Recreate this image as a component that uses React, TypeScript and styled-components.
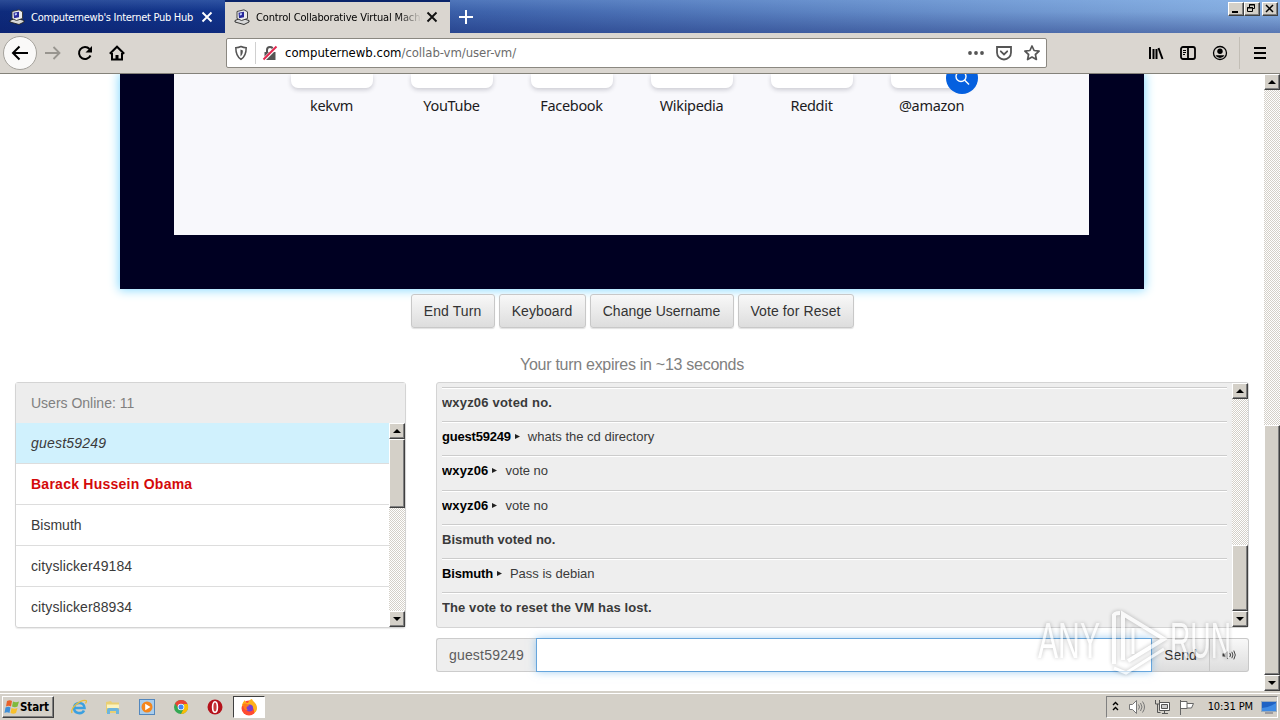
import React from 'react';
import styled, { createGlobalStyle, css } from 'styled-components';

const GlobalStyle = createGlobalStyle`
  * {
    box-sizing: border-box;
  }
  body {
    margin: 0;
    overflow: hidden;
    font-family: 'Liberation Sans', Arial, sans-serif;
  }
`;

const tahoma = `'DejaVu Sans Condensed', 'DejaVu Sans', sans-serif`;

interface TextProps {
  $size?: number;
  $spacing?: number;
  $color?: string;
}
const Text = styled.span<TextProps>`
  white-space: pre;
  font-size: ${props => props.$size || 14}px;
  letter-spacing: ${props => props.$spacing || 0}px;
  color: ${props => props.$color || 'inherit'};
`;

const Window = styled.div`
  position: relative;
  width: 1280px;
  height: 720px;
  overflow: hidden;
  display: flex;
  flex-direction: column;
  background: #fff;
`;

/* ---------- browser chrome ---------- */
const TabStrip = styled.div`
  height: 33px;
  flex: none;
  display: flex;
  justify-content: space-between;
  background: linear-gradient(180deg, rgba(160, 205, 255, 0.2), rgba(10, 40, 110, 0) 35%, rgba(10, 25, 100, 0.36)),
    linear-gradient(90deg, #0e2b7c 0, #12358c 225px, #3c61aa 460px, #5f86c4 850px, #86aee0 1280px);
`;
const Tabs = styled.div`
  display: flex;
  font-family: ${tahoma};
`;
const Tab = styled.div<{ $active?: boolean }>`
  width: 225px;
  height: 33px;
  display: flex;
  align-items: center;
  padding: 1px 11px 0 9px;
  color: #fff;
  svg {
    flex: none;
  }
  ${props =>
    props.$active &&
    css`
      color: #000;
      background: #dad6d0;
      border-top: 2px solid #0a246a;
      padding-top: 0;
      padding-bottom: 2px;
    `}
`;
const TabTitle = styled.div<{ $fade?: boolean }>`
  width: 167px;
  margin: 0 3px 0 6px;
  overflow: hidden;
  line-height: 18px;
  ${props => props.$fade && 'mask-image: linear-gradient(90deg, #000 142px, transparent 166px);'}
`;
const NewTab = styled.div`
  padding: 9px 9px;
`;
const Caption = styled.div`
  display: flex;
  padding: 2px 2px 0 0;
`;
const bevel = css`
  background: #d4d0c8;
  border: 1px solid;
  border-color: #fff #404040 #404040 #fff;
  box-shadow: inset -1px -1px 0 #808080;
`;
const CaptionButton = styled.div<{ $gap?: boolean }>`
  ${bevel}
  width: 16px;
  height: 14px;
  margin-left: ${props => (props.$gap ? 2 : 0)}px;
  svg {
    display: block;
  }
`;
const Toolbar = styled.div`
  height: 41px;
  flex: none;
  display: flex;
  align-items: center;
  background: #dad6d0;
  border-bottom: 1px solid #84827a;
  padding: 0 9px 1px 3px;
`;
const BackButton = styled.div`
  width: 34px;
  height: 34px;
  border-radius: 50%;
  background: #faf9f8;
  border: 1px solid #a5a29c;
  display: flex;
  align-items: center;
  justify-content: center;
`;
const NavIcons = styled.div`
  display: flex;
  gap: 16px;
  margin-left: 8px;
  width: 181px;
`;
const UrlBar = styled.div`
  width: 821px;
  height: 30px;
  background: #fff;
  border: 1px solid #8b8881;
  border-radius: 2px;
  display: flex;
  align-items: center;
  padding: 0 6px;
  font-family: ${tahoma};
  svg {
    flex: none;
  }
`;
const UrlDivider = styled.div`
  width: 1px;
  height: 22px;
  background: #d0d0d0;
  margin: 0 6px 0 6px;
`;
const Url = styled.div`
  flex: 1;
  margin-left: 7px;
  line-height: 20px;
`;
const UrlIcons = styled.div`
  display: flex;
  gap: 12px;
`;
const RightIcons = styled.div`
  flex: 1;
  display: flex;
  align-items: center;
  gap: 16px;
  padding-left: 101px;
`;
const ToolbarDivider = styled.div`
  width: 1px;
  height: 32px;
  background: #c2beb6;
  margin: 0 -3px 0 -5px;
`;

/* ---------- classic scrollbar ---------- */
const Track = styled.div`
  width: 16px;
  flex: none;
  display: flex;
  flex-direction: column;
  background: repeating-conic-gradient(#fff 0 25%, #d4d0c8 0 50%) 0 0 / 2px 2px;
`;
const ScrollButton = styled.div`
  ${bevel}
  height: 16px;
  flex: none;
  svg {
    display: block;
  }
`;
const Thumb = styled.div`
  ${bevel}
  flex: none;
`;
const Gap = styled.div`
  flex: 1;
`;

interface ScrollbarProps {
  before?: number;
  thumb: number;
}
const Scrollbar: React.FC<ScrollbarProps> = ({ before = 0, thumb }) => (
  <Track>
    <ScrollButton>
      <svg width="14" height="14">
        <path d="M3 9h8L7 5z" />
      </svg>
    </ScrollButton>
    <div style={{ height: before }} />
    <Thumb style={{ height: thumb }} />
    <Gap />
    <ScrollButton>
      <svg width="14" height="14">
        <path d="M3 5h8L7 9z" />
      </svg>
    </ScrollButton>
  </Track>
);

/* ---------- page ---------- */
const Viewport = styled.div`
  height: 617px;
  flex: none;
  display: flex;
`;
const Page = styled.div`
  width: 1264px;
  height: 617px;
  overflow: hidden;
  display: flex;
  flex-direction: column;
  align-items: center;
  color: #3a3a3a;
`;
const VmDisplay = styled.div`
  width: 1024px;
  height: 215px;
  flex: none;
  padding: 0 55px 54px 54px;
  background: #000022;
  box-shadow: 0 0 10px 1px #84d9ff;
`;
const NewTabPage = styled.div`
  height: 161px;
  background: #f8f8fc;
  padding-left: 98px;
  display: flex;
  font-family: 'Noto Sans', sans-serif;
  color: #1c1b22;
`;
const Site = styled.div`
  width: 120px;
  display: flex;
  flex-direction: column;
  align-items: center;
`;
const Tile = styled.div`
  position: relative;
  width: 82px;
  height: 14px;
  background: #fff;
  border-radius: 0 0 7px 7px;
  box-shadow: 0 2px 4px rgba(50, 50, 70, 0.22);
  clip-path: inset(0 -30px -20px -10px);
`;
const SearchBadge = styled.div`
  position: absolute;
  left: 55px;
  top: -12px;
  width: 32px;
  height: 32px;
  border-radius: 50%;
  background: #0560df;
`;
const SiteName = styled.div`
  margin: 5px 1px 0 0;
  line-height: 24px;
`;
const Actions = styled.div`
  display: flex;
  gap: 4px;
  margin-top: 5px;
  height: 34px;
`;
const buttonFace = css`
  background: linear-gradient(180deg, #f8f8f8, #dddddd);
  border: 1px solid #c8c8c8;
  display: flex;
  align-items: center;
  justify-content: center;
  color: #333;
`;
const Button = styled.div<{ $width: number }>`
  ${buttonFace}
  width: ${props => props.$width}px;
  height: 34px;
  border-radius: 3px;
  box-shadow: 0 1px 1px rgba(0, 0, 0, 0.12);
`;
const TurnStatus = styled.div`
  margin-top: 26px;
  height: 28px;
  line-height: 22px;
`;
const Columns = styled.div`
  width: 1234px;
  display: flex;
  gap: 30px;
`;
const UserPanel = styled.div`
  width: 391px;
  height: 246px;
  border: 1px solid #d4d4d4;
  border-radius: 3px;
  box-shadow: 0 1px 1px rgba(0, 0, 0, 0.08);
`;
const UserHeader = styled.div`
  height: 40px;
  padding-left: 15px;
  line-height: 40px;
  background: #ededed;
  color: #808080;
`;
const UserBody = styled.div`
  height: 204px;
  display: flex;
`;
const UserRows = styled.div`
  flex: 1;
  overflow: hidden;
`;
const UserRow = styled.div<{ $kind?: string }>`
  height: 41px;
  line-height: 40px;
  padding-left: 15px;
  border-bottom: 1px solid #ddd;
  ${props => props.$kind === 'self' && 'background: #d0f1fd; font-style: italic;'}
  ${props => props.$kind === 'admin' && 'color: #d40a0a; font-weight: bold;'}
`;
const ChatColumn = styled.div`
  width: 813px;
`;
const ChatBox = styled.div`
  height: 246px;
  display: flex;
  background: #eee;
  border: 1px solid #d4d4d4;
  border-radius: 3px;
`;
const Messages = styled.div`
  width: 785px;
  margin: 4px 5px 0;
  overflow: hidden;
`;
const Message = styled.div<{ $notice: boolean }>`
  height: 34.200px;
  border-top: 1px solid #ccc;
  box-shadow: inset 0 1px 0 #fff;
  line-height: ${props => (props.$notice ? 27 : 28)}px;
`;
const Bold = styled(Text)`
  font-weight: bold;
`;
const Marker = styled.svg`
  margin: 0 8px 2px 4px;
`;
const Composer = styled.div`
  margin-top: 10px;
  height: 34px;
  display: flex;
`;
const NameTag = styled.div`
  width: 100px;
  background: #eee;
  border: 1px solid #ccc;
  border-right: 0;
  border-radius: 3px 0 0 3px;
  display: flex;
  align-items: center;
  justify-content: center;
  color: #5c5c5c;
`;
const Input = styled.div`
  position: relative;
  width: 616px;
  background: #fff;
  border: 1px solid #66a5dc;
  box-shadow: 0 0 8px rgba(102, 175, 233, 0.6);
`;
const SendButton = styled.div`
  ${buttonFace}
  width: 58px;
  border-left: 0;
`;
const SoundButton = styled.div`
  ${buttonFace}
  width: 39px;
  border-left: 0;
  border-radius: 0 3px 3px 0;
`;

/* ---------- taskbar ---------- */
const Taskbar = styled.div`
  height: 29px;
  flex: none;
  display: flex;
  align-items: center;
  background: #d4d0c8;
  border-top: 2px solid #d4d0c8;
  box-shadow: inset 0 1px 0 #fff;
  padding: 1px 2px 0;
  font-family: ${tahoma};
`;
const StartButton = styled.div`
  ${bevel}
  width: 52px;
  height: 22px;
  display: flex;
  align-items: center;
  padding-left: 1px;
  font-weight: bold;
`;
const QuickLaunch = styled.div`
  display: flex;
  gap: 18px;
  margin: 0 10px 0 17px;
`;
const RunningTask = styled.div`
  width: 32px;
  height: 22px;
  background: #fff;
  border: 1px solid;
  border-color: #404040 #fff #fff #404040;
  display: flex;
  justify-content: center;
  align-items: center;
`;
const Tray = styled.div`
  width: 172px;
  height: 22px;
  margin-left: auto;
  border: 1px solid;
  border-color: #808080 #fff #fff #808080;
  display: flex;
  align-items: center;
  padding-left: 4px;
`;
const Clock = styled.div`
  margin: -2px 8px 0 13px;
  line-height: 20px;
`;

/* ---------- watermark over the page corner ---------- */
const Watermark = styled.svg`
  position: absolute;
  left: 1030px;
  top: 600px;
  overflow: visible;
  filter: drop-shadow(0 0 2px rgba(0, 0, 0, 0.4));
`;

const PcIcon = () => (
  <svg width="16" height="16" viewBox="0 0 16 16">
    <path d="M1 11.500L7 9l8 2.500v1.500L10 15.500 1 13z" fill="#d8d8d8" stroke="#222" strokeWidth=".9" />
    <path d="M3 2.500L10 .8l3.500 2v6.700L7.500 11.500 3 9.500z" fill="#ececec" stroke="#333" strokeWidth=".9" />
    <path d="M4.500 3.800l5.500-1v5.500L5 9.300z" fill="#28289a" />
    <path d="M5.800 4.500l2-.500v2l-2 .500z" fill="#c8d8ff" />
  </svg>
);

const CloseIcon = ({ color }: { color: string }) => (
  <svg width="12" height="12" viewBox="0 0 12 12" stroke={color} strokeWidth="1.900">
    <path d="M1.500 1.500l9 9M10.500 1.500l-9 9" />
  </svg>
);

const PageSpeakerIcon = () => (
  <svg width="14" height="14" viewBox="0 0 14 14" fill="none" stroke="#444">
    <path d="M.5 5.500h2L6 3v8L2.500 8.500h-2z" fill="#444" stroke="none" />
    <path d="M7.800 5q1.600 2 0 4M9.800 3.800q2.300 3.200 0 6.400M11.800 2.600q3 4.400 0 8.800" />
  </svg>
);

const TraySpeakerIcon = () => (
  <svg width="18" height="16" viewBox="0 0 18 16" fill="none" stroke="#777">
    <path d="M1.500 5.500h3l4-4v13l-4-4h-3z" fill="#fff" />
    <path d="M10.500 5.500q2 2.500 0 5M12.500 4q3 4 0 8M14.500 2.500q4 5.500 0 11" />
  </svg>
);

const FirefoxIcon = () => (
  <svg width="18" height="18" viewBox="0 0 18 18">
    <circle cx="9" cy="10" r="7.500" fill="#ff4b30" />
    <path d="M2 8C2 5 4 3 5 2c0 2 1 3 3 3 1-3 3-4 4-4 0 2 5 4 5 9 0 2-1 4-3 5 1-6-4-8-8-7z" fill="#ffb21a" />
    <circle cx="9.500" cy="10" r="3.600" fill="#7a3fd0" />
    <path d="M3 6c3-1 5 0 6 2-3 0-3 3-1 4-3 1-5-2-5-6z" fill="#ff7a1c" />
  </svg>
);

const sites = ['kekvm', 'YouTube', 'Facebook', 'Wikipedia', 'Reddit', '@amazon'];

const users = [
  { name: 'guest59249', kind: 'self', spacing: 0.2 },
  { name: 'Barack Hussein Obama', kind: 'admin', spacing: 0.25 },
  { name: 'Bismuth', spacing: 0 },
  { name: 'cityslicker49184', spacing: 0.1 },
  { name: 'cityslicker88934', spacing: 0.1 },
];

interface ChatMessage {
  from?: string;
  text: string;
  spacing: number;
}
const messages: ChatMessage[] = [
  { text: 'wxyz06 voted no.', spacing: 0.2 },
  { from: 'guest59249', text: 'whats the cd directory', spacing: -0.2 },
  { from: 'wxyz06', text: 'vote no', spacing: 0.15 },
  { from: 'wxyz06', text: 'vote no', spacing: 0.15 },
  { text: 'Bismuth voted no.', spacing: 0 },
  { from: 'Bismuth', text: 'Pass is debian', spacing: -0.15 },
  { text: 'The vote to reset the VM has lost.', spacing: 0.09 },
];

const BrowserTabs = () => (
  <TabStrip>
    <Tabs>
      <Tab>
        <PcIcon />
        <TabTitle>
          <Text $size={11} $spacing={-0.28}>Computernewb's Internet Pub Hub</Text>
        </TabTitle>
        <CloseIcon color="#fff" />
      </Tab>
      <Tab $active>
        <PcIcon />
        <TabTitle $fade>
          <Text $size={11} $spacing={-0.15}>Control Collaborative Virtual Machi</Text>
        </TabTitle>
        <CloseIcon color="#111" />
      </Tab>
      <NewTab>
        <svg width="14" height="14" stroke="#fff" strokeWidth="2">
          <path d="M7 0v14M0 7h14" />
        </svg>
      </NewTab>
    </Tabs>
    <Caption>
      <CaptionButton>
        <svg width="14" height="12">
          <path d="M3 8h6v2H3z" />
        </svg>
      </CaptionButton>
      <CaptionButton>
        <svg width="14" height="12" fill="none" stroke="#000">
          <path d="M4.500 4V1.500h5v4H8M4 2h6M2.500 4.500h5v4h-5zM2 5h6" />
        </svg>
      </CaptionButton>
      <CaptionButton $gap>
        <svg width="14" height="12" stroke="#000" strokeWidth="1.500">
          <path d="M3 2l7 7M10 2L3 9" />
        </svg>
      </CaptionButton>
    </Caption>
  </TabStrip>
);

const BrowserToolbar = () => (
  <Toolbar>
    <BackButton>
      <svg width="18" height="16" fill="none" stroke="#000" strokeWidth="2">
        <path d="M17 8H2M8.500 1.500L2 8l6.500 6.500" />
      </svg>
    </BackButton>
    <NavIcons>
      <svg width="16" height="16" fill="none" stroke="#98958f" strokeWidth="1.800">
        <path d="M0 8h14M8.500 2l6 6-6 6" />
      </svg>
      <svg width="16" height="16" fill="none" stroke="#000" strokeWidth="2">
        <path d="M13.500 10.500a6 6 0 1 1-1-6.500" />
        <path d="M15 1v6.500H8.500z" fill="#000" stroke="none" />
      </svg>
      <svg width="16" height="16" fill="none" stroke="#000" strokeWidth="2">
        <path d="M.8 8.700L8 1.700l7.200 7M3 8v6.500h10V8" />
        <path d="M6.500 15v-5h3v5z" fill="#000" stroke="none" />
      </svg>
    </NavIcons>
    <UrlBar>
      <svg width="16" height="16" viewBox="0 0 16 16" fill="none" stroke="#555" strokeWidth="1.500">
        <path d="M8 1.500c2 1 3.500 1.200 5.200 1.200 0 5.500-1 9-5.200 11.600C3.800 11.700 2.800 8.200 2.800 2.700 4.500 2.700 6 2.500 8 1.500z" />
        <path d="M7.500 4.500v7c1.800-1.500 2.300-3.500 2.400-6z" fill="#555" stroke="none" />
      </svg>
      <UrlDivider />
      <svg width="16" height="16" viewBox="0 0 16 16">
        <path d="M2.500 7h11v8h-11z" fill="#555" />
        <path d="M5 7V5a3 3 0 0 1 6 0v2" fill="none" stroke="#555" strokeWidth="2" />
        <path d="M1 15.500L15 1.500" stroke="#fff" strokeWidth="3.600" />
        <path d="M1.500 14.500L14.500 1.500" stroke="#e22850" strokeWidth="2" />
      </svg>
      <Url>
        <Text $size={13} $color="#000">computernewb.com</Text>
        <Text $size={13} $color="#6b6b6b" $spacing={-0.05}>/collab-vm/user-vm/</Text>
      </Url>
      <UrlIcons>
        <svg width="16" height="16" fill="#555">
          <circle cx="2" cy="8" r="1.900" />
          <circle cx="8" cy="8" r="1.900" />
          <circle cx="14" cy="8" r="1.900" />
        </svg>
        <svg width="16" height="16" viewBox="0 0 16 16" fill="none" stroke="#555" strokeWidth="1.800" strokeLinecap="round">
          <path d="M1 2h14v5.500a7 7 0 0 1-14 0z" />
          <path d="M4.800 6.300L8 9.400l3.200-3.100" />
        </svg>
        <svg width="16" height="16" viewBox="0 0 16 16" fill="none" stroke="#555" strokeWidth="1.700" strokeLinejoin="round">
          <path d="M8 1l2.100 4.500 5 .6-3.700 3.400 1 5L8 12l-4.400 2.500 1-5L.9 6.100l5-.6z" />
        </svg>
      </UrlIcons>
    </UrlBar>
    <RightIcons>
      <svg width="16" height="16" stroke="#000" strokeWidth="2">
        <path d="M2 2v12M5.500 4v10M8.500 4v10M10.500 3l4 11" />
      </svg>
      <svg width="16" height="16" fill="none" stroke="#000" strokeWidth="1.800">
        <rect x="1" y="2" width="14" height="12" rx="2" />
        <path d="M8 2v12" />
        <path d="M3 5.500h3M3 7.500h3M3 9.500h2" strokeWidth="1" />
      </svg>
      <svg width="16" height="16" fill="none" stroke="#000">
        <circle cx="8" cy="8" r="6.500" strokeWidth="1.300" />
        <circle cx="8" cy="6.200" r="2.700" fill="#000" stroke="none" />
        <path d="M3.500 10.200h9a5 5 0 0 1-9 0z" fill="#000" stroke="none" />
      </svg>
      <ToolbarDivider />
      <svg width="14" height="16" stroke="#000" strokeWidth="2">
        <path d="M1 3h12M1 8h12M1 13h12" />
      </svg>
    </RightIcons>
  </Toolbar>
);

const ChatPanel = () => (
  <ChatColumn>
    <ChatBox>
      <Messages>
        {messages.map((message, i) => (
          <Message key={i} $notice={!message.from}>
            {message.from ? (
              <>
                <Bold $size={13} $spacing={message.spacing} $color="#000">{message.from}</Bold>
                <Marker width="5" height="5">
                  <path d="M0 0l5 2.500-5 2.500z" fill="#222" />
                </Marker>
                <Text $size={13}>{message.text}</Text>
              </>
            ) : (
              <Bold $size={13} $spacing={message.spacing}>{message.text}</Bold>
            )}
          </Message>
        ))}
      </Messages>
      <Scrollbar before={146} thumb={66} />
    </ChatBox>
    <Composer>
      <NameTag>
        <Text $spacing={0.2}>guest59249</Text>
      </NameTag>
      <Input />
      <SendButton>
        <Text>Send</Text>
      </SendButton>
      <SoundButton>
        <PageSpeakerIcon />
      </SoundButton>
    </Composer>
  </ChatColumn>
);

const DesktopTaskbar = () => (
  <Taskbar>
    <StartButton>
      <svg width="16" height="16" viewBox="0 0 16 16">
        <path d="M3 2q3-1.500 5 0L7 7.500q-2.500-1.500-5 0z" fill="#e8622a" />
        <path d="M9 2.500q3 1.500 6 0l-1.500 5q-2.500 1.500-5.500 0z" fill="#7fba3c" />
        <path d="M1.500 8.500q3-1.500 5 0l-1 5.500q-2.500-1.500-5 0z" fill="#3f8fd8" />
        <path d="M7.500 9q3 1.500 6 0L12 14q-2.500 1.500-5.500 0z" fill="#f8c02c" />
      </svg>
      <Text $size={11.5} $spacing={-0.1}>Start</Text>
    </StartButton>
    <QuickLaunch>
      <svg width="16" height="16" viewBox="0 0 16 16" fill="none">
        <path d="M3 9h10.500c0-7-10.500-6.500-10.500 0 0 6 8 6.500 10 2.500" stroke="#3ba0e0" strokeWidth="2.600" />
        <path d="M1 14C-1 9 10 0 15 1.500c1 .5 0 2-.5 3" stroke="#e8bd3c" strokeWidth="1.300" />
      </svg>
      <svg width="16" height="16" viewBox="0 0 16 16">
        <path d="M1 3l5-1 1 1.500h7V14H1z" fill="#e9cf74" />
        <path d="M2 5.500h12V9H2z" fill="#fbf3bd" />
        <path d="M2 15v-4q0-2 2-2h8q2 0 2 2v4h-3v-3H5v3z" fill="#6db5dd" />
      </svg>
      <svg width="16" height="16" viewBox="0 0 16 16">
        <rect x=".5" y=".5" width="15" height="15" fill="#a9cdec" stroke="#5387bd" />
        <circle cx="8" cy="8" r="5.500" fill="#f4861c" />
        <path d="M6.200 4.700L11.500 8l-5.300 3.300z" fill="#fff" />
      </svg>
      <svg width="16" height="16" viewBox="0 0 16 16">
        <circle cx="8" cy="8" r="7" fill="#34a853" />
        <path d="M2 4.500A7 7 0 0 1 14.500 5H8l-3 3.500z" fill="#ea4335" />
        <path d="M14.500 5A7 7 0 0 1 8 15l3-6V5z" fill="#fbbc05" />
        <circle cx="8" cy="8" r="3.300" fill="#fff" />
        <circle cx="8" cy="8" r="2.500" fill="#4285f4" />
      </svg>
      <svg width="16" height="16" viewBox="0 0 16 16">
        <circle cx="8" cy="8" r="7.500" fill="#b5121b" />
        <ellipse cx="8" cy="8" rx="2.400" ry="5.300" fill="#c93a3a" stroke="#fff" strokeWidth="1.600" />
      </svg>
    </QuickLaunch>
    <RunningTask>
      <FirefoxIcon />
    </RunningTask>
    <Tray>
      <svg width="9" height="12" fill="none" stroke="#000" strokeWidth="1.400">
        <path d="M2 4l2.500-2.500L7 4M2 9l2.500-2.500L7 9" />
      </svg>
      <Gap />
      <TraySpeakerIcon />
      <Gap />
      <svg width="16" height="16" fill="none" stroke="#555">
        <path d="M5.500 3.500h10v8h-10z" fill="#fff" />
        <path d="M7.500 5.500h6v4h-6z" fill="#ccc" />
        <path d="M8 14.500h6M10.500 12v2M1.500 1v4h4V1M3.500 5v8.500h3" />
      </svg>
      <Gap />
      <svg width="17" height="16" fill="#fff" stroke="#666">
        <path d="M2.500 1v15M3 2.500h6v7H3M9 4.500h6.500l-2 4.500H9" />
      </svg>
      <Clock>
        <Text $size={11} $spacing={-0.1}>10:31 PM</Text>
      </Clock>
      <svg width="16" height="14">
        <rect x=".5" y="1.500" width="15" height="10" fill="#1e62c4" stroke="#9ab" />
        <path d="M1 8q6 0 14-5v8H1z" fill="#3f8be4" />
        <path d="M4 13h8" stroke="#667" />
      </svg>
    </Tray>
  </Taskbar>
);

const App: React.FC = () => (
  <Window>
    <GlobalStyle />
    <BrowserTabs />
    <BrowserToolbar />
    <Viewport>
      <Page>
        <VmDisplay>
          <NewTabPage>
            {sites.map(site => (
              <Site key={site}>
                <Tile>
                  {site === '@amazon' && (
                    <SearchBadge>
                      <svg width="32" height="32" fill="none" stroke="#fff" strokeWidth="1.400">
                        <circle cx="15" cy="14.500" r="5" />
                        <path d="M18.500 18l4.500 4.500" />
                      </svg>
                    </SearchBadge>
                  )}
                </Tile>
                <SiteName>
                  <Text $size={14.5} $spacing={-0.32}>{site}</Text>
                </SiteName>
              </Site>
            ))}
          </NewTabPage>
        </VmDisplay>
        <Actions>
          <Button $width={84}><Text $spacing={0.1}>End Turn</Text></Button>
          <Button $width={87}><Text $spacing={0.1}>Keyboard</Text></Button>
          <Button $width={144}><Text>Change Username</Text></Button>
          <Button $width={116}><Text $spacing={0.1}>Vote for Reset</Text></Button>
        </Actions>
        <TurnStatus>
          <Text $size={16} $spacing={-0.28} $color="#808080">Your turn expires in ~13 seconds</Text>
        </TurnStatus>
        <Columns>
          <UserPanel>
            <UserHeader>
              <Text>Users Online: 11</Text>
            </UserHeader>
            <UserBody>
              <UserRows>
                {users.map(user => (
                  <UserRow key={user.name} $kind={user.kind}>
                    <Text $spacing={user.spacing}>{user.name}</Text>
                  </UserRow>
                ))}
              </UserRows>
              <Scrollbar thumb={69} />
            </UserBody>
          </UserPanel>
          <ChatPanel />
        </Columns>
      </Page>
      <Scrollbar before={335} thumb={250} />
    </Viewport>
    <DesktopTaskbar />
    <Watermark width="210" height="80" fill="none" stroke="#fff" opacity="0.65">
      <text x="8" y="58" fontSize="50" fontFamily="Liberation Sans" fill="#fff" stroke="none" textLength="62" lengthAdjust="spacingAndGlyphs">ANY</text>
      <path d="M84 64V16q0-3 6-3M84 14v50M93 60V14l41 25-36 22" strokeWidth="4" />
      <path d="M84 68l12 5 38-24M103 28v26" strokeWidth="3" />
      <text x="140" y="58" fontSize="50" fontFamily="Liberation Sans" fill="#fff" stroke="none" textLength="61" lengthAdjust="spacingAndGlyphs">RUN</text>
    </Watermark>
  </Window>
);

export default App;
